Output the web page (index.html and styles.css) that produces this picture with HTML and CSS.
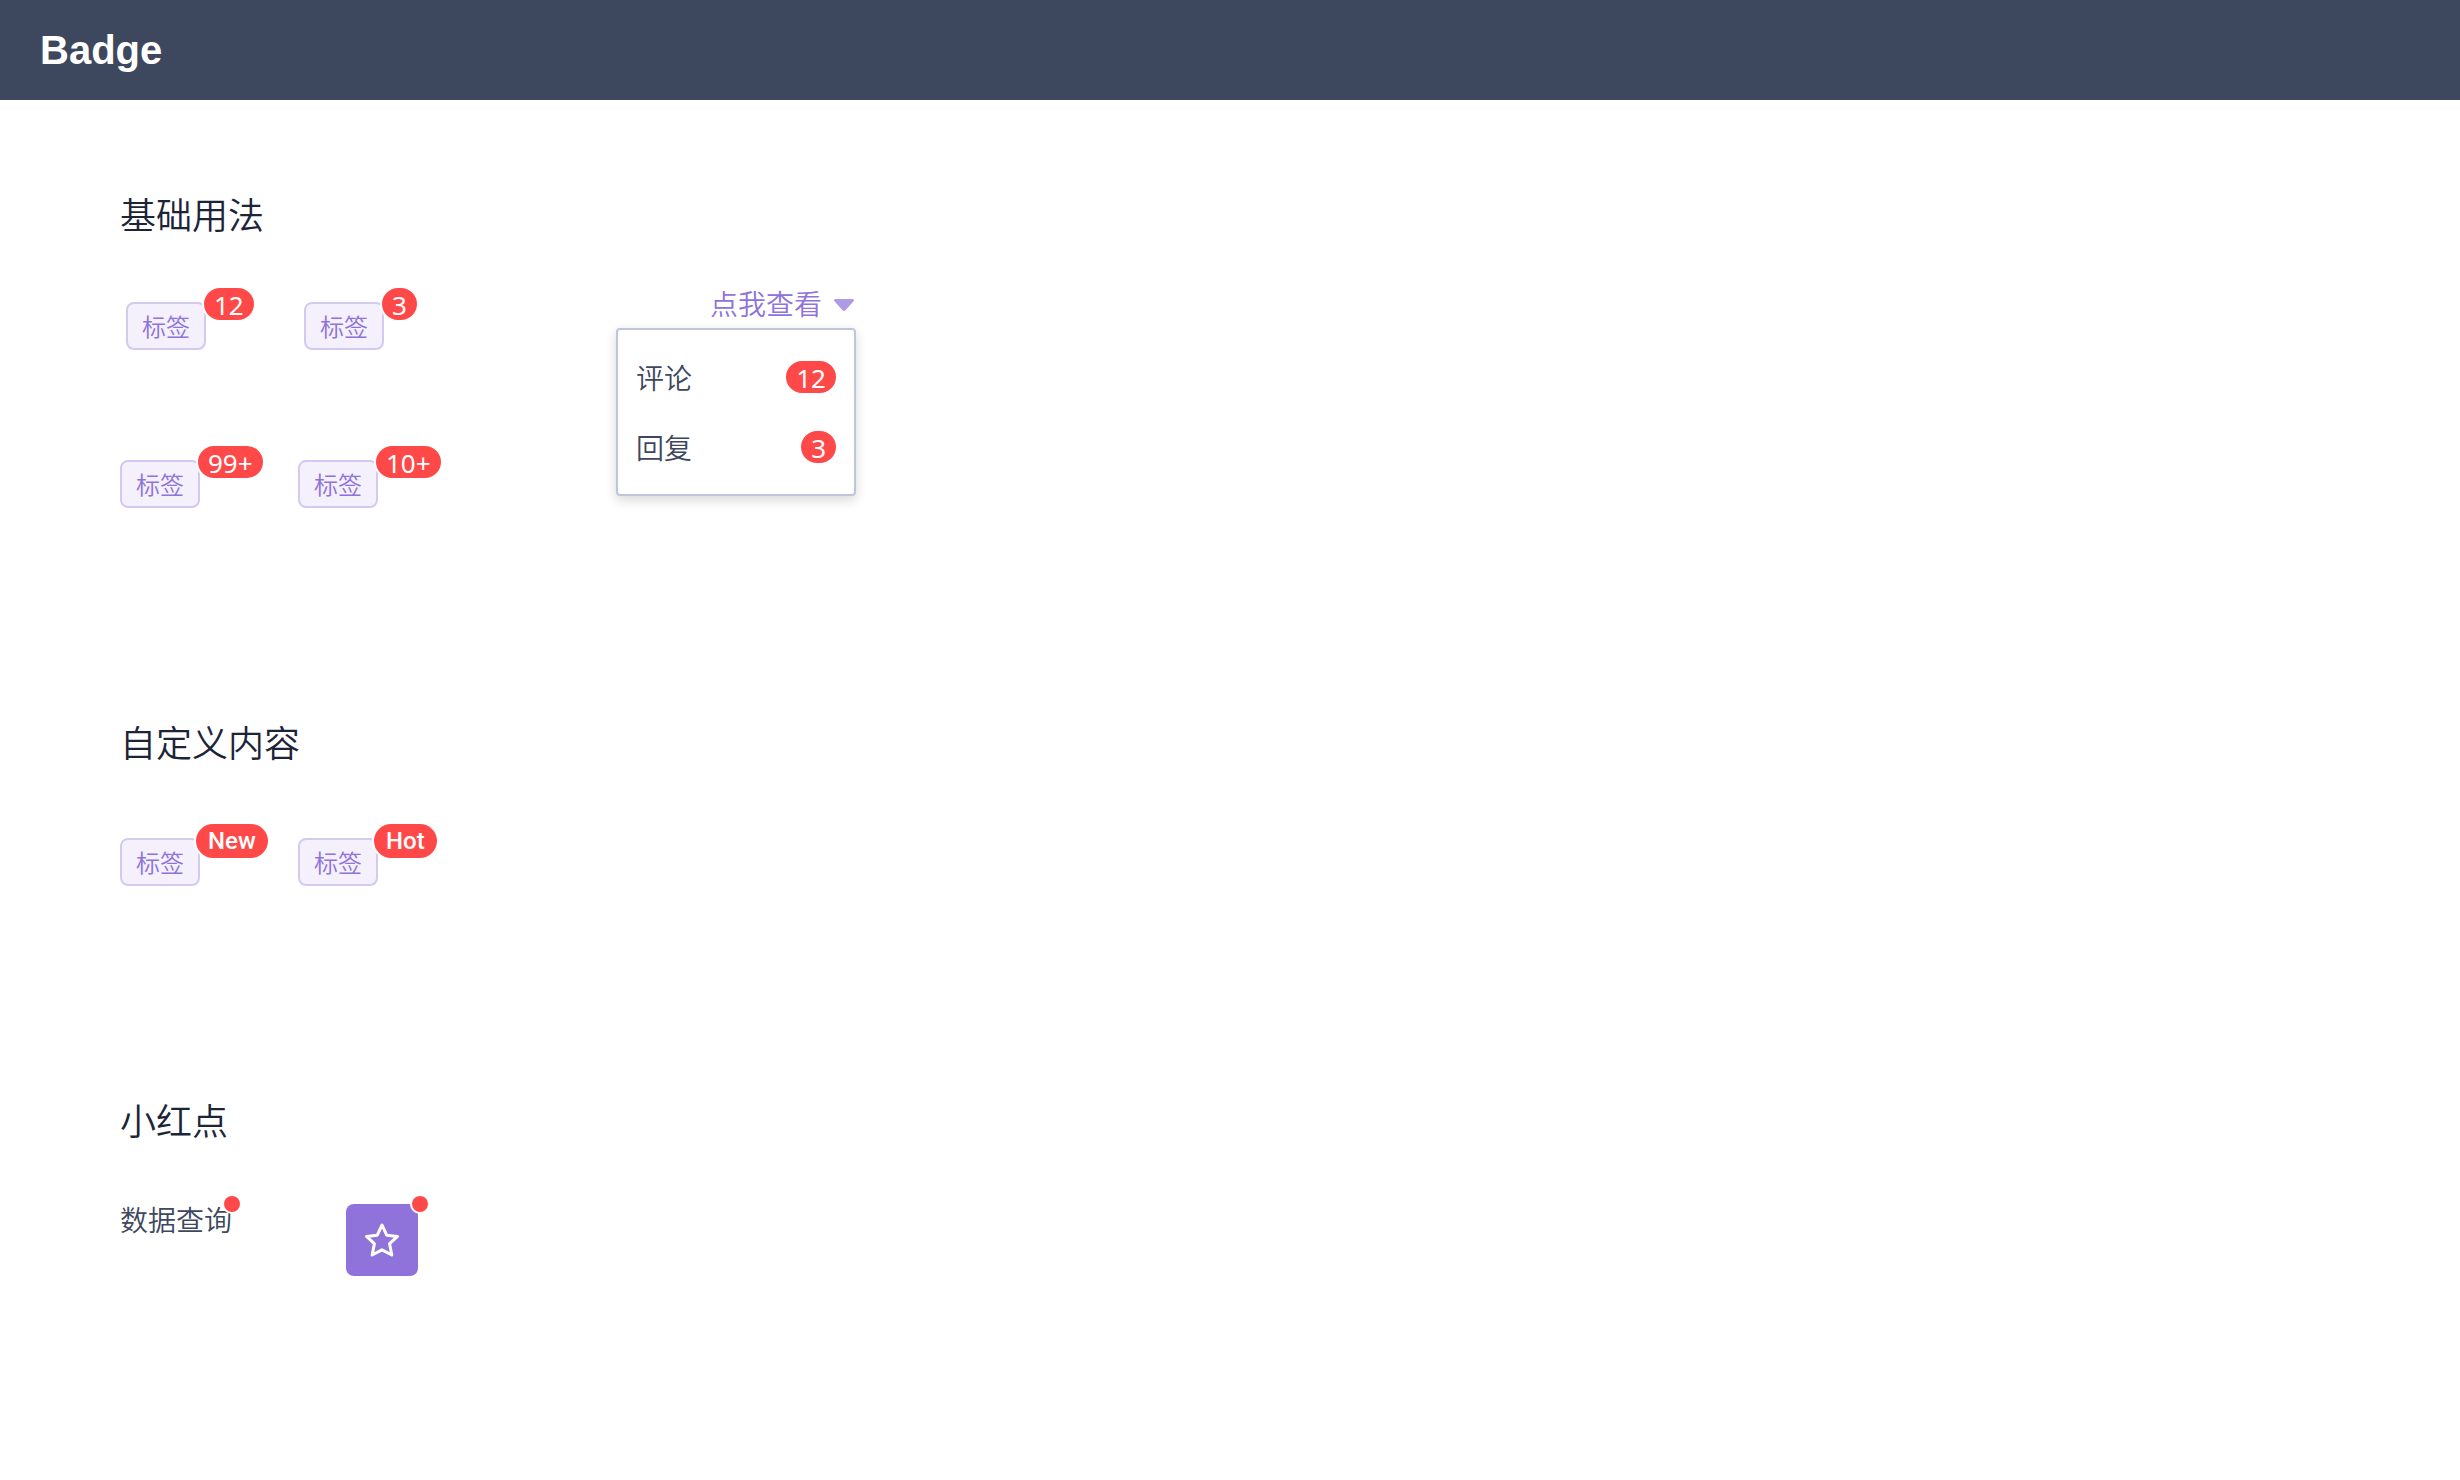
FILE: index.html
```html
<!DOCTYPE html>
<html lang="zh-CN">
<head>
<meta charset="utf-8">
<title>Badge</title>
<link rel="stylesheet" href="styles.css">
</head>
<body>
<header class="topbar"><h1 class="topbar-title">Badge</h1></header>
<main class="content">
  <section class="section">
    <h2 class="section-title">基础用法</h2>
    <div class="demo demo-basic">
      <div class="tag-rows">
        <div class="tag-row tag-row-indent">
          <span class="tag">标签<span class="badge badge-corner">12</span></span>
          <span class="tag">标签<span class="badge badge-corner">3</span></span>
        </div>
        <div class="tag-row">
          <span class="tag">标签<span class="badge badge-corner">99+</span></span>
          <span class="tag">标签<span class="badge badge-corner">10+</span></span>
        </div>
      </div>
      <div class="dropdown">
        <button class="dropdown-trigger" type="button" aria-expanded="true">点我查看
          <svg class="caret" viewBox="0 0 20 12" aria-hidden="true"><path d="M1.5 0h17c1.3 0 2 1.3 1 2.300l-8 9c-.8.900-2.200.900-3 0l-8-9C-.5 1.300.2 0 1.500 0z"/></svg>
        </button>
        <ul class="menu">
          <li class="menu-item">评论<span class="badge">12</span></li>
          <li class="menu-item">回复<span class="badge">3</span></li>
        </ul>
      </div>
    </div>
  </section>
  <section class="section">
    <h2 class="section-title">自定义内容</h2>
    <div class="demo demo-custom">
      <div class="tag-row">
        <span class="tag">标签<span class="badge-text">New</span></span>
        <span class="tag">标签<span class="badge-text">Hot</span></span>
      </div>
    </div>
  </section>
  <section class="section">
    <h2 class="section-title">小红点</h2>
    <div class="demo demo-dot">
      <span class="dot-host">数据查询<span class="dot dot-on-text"></span></span>
      <button class="icon-button" type="button" aria-label="收藏">
        <svg class="star" viewBox="0 0 72 72" aria-hidden="true"><path d="M36 21l4.700 10.200 10.800 1.200-7.900 7.300 2.200 11.300L36 45.800 26.200 51l2.200-11.300-7.900-7.300 10.800-1.200z"/></svg>
        <span class="dot dot-on-button"></span>
      </button>
    </div>
  </section>
</main>
</body>
</html>
```
FILE: styles.css
```css
* { box-sizing: border-box; }

body {
  margin: 0;
  background: #fff;
  color: #3d475e;
  font-family: "Noto Sans CJK SC", sans-serif;
  font-size: 28px;
  font-weight: 350;
  line-height: 40px;
}

.topbar {
  display: flex;
  align-items: center;
  height: 100px;
  padding: 0 40px;
  background: #3d475d;
}

.topbar-title {
  margin: 0;
  color: #fff;
  font: bold 40px/48px "Liberation Sans", sans-serif;
}

.content { padding: 88px 120px 0; }

.section { margin-bottom: 208px; }

.section-title {
  margin: 0;
  color: #1c2438;
  font-size: 36px;
  font-weight: 350;
  line-height: 50px;
}

.demo { display: flex; }

.demo-basic {
  gap: 140px;
  margin-top: 46px;
}

.tag-rows {
  display: grid;
  row-gap: 110px;
  padding-top: 18px;
}

.tag-row {
  display: grid;
  grid-template-columns: 178px 178px;
}

.tag-row-indent { margin-left: 6px; margin-right: -6px; }

.tag {
  position: relative;
  justify-self: start;
  padding: 0 14px;
  border: 2px solid #d4caf0;
  border-radius: 8px;
  background: #f4f0fc;
  color: #8f73da;
  font-size: 24px;
  line-height: 44px;
}

.badge {
  height: 36px;
  padding: 0 10px;
  border: 2px solid #fff;
  border-radius: 18px;
  background: #ff4949;
  color: #fff;
  font-family: "Noto Sans", sans-serif;
  font-size: 26px;
  font-weight: 400;
  line-height: 34px;
  white-space: nowrap;
}

.badge-corner {
  position: absolute;
  top: -18px;
  left: 74px;
}

.badge-text {
  position: absolute;
  top: -16px;
  left: 74px;
  padding: 0 12px;
  border-radius: 17px;
  background: #ff4949;
  box-shadow: 0 0 0 2px #fff;
  color: #fff;
  font-family: Roboto, sans-serif;
  font-size: 24px;
  font-weight: 500;
  line-height: 34px;
}

.dropdown {
  position: relative;
  width: 240px;
}

.dropdown-trigger {
  display: flex;
  align-items: center;
  justify-content: flex-end;
  gap: 12px;
  width: 100%;
  padding: 0 2px;
  border: 0;
  background: none;
  color: #8f73da;
  font: inherit;
  line-height: 38px;
}

.caret {
  width: 20px;
  height: 12px;
  margin-top: 4px;
  fill: #af9be5;
}

.menu {
  position: absolute;
  top: 44px;
  left: 0;
  width: 100%;
  margin: 0;
  padding: 12px 16px 12px 18px;
  border: 2px solid #bec6da;
  border-radius: 4px;
  background: #fff;
  box-shadow: 0 4px 12px rgba(0, 0, 0, 0.16);
  list-style: none;
}

.menu-item {
  display: flex;
  align-items: center;
  justify-content: space-between;
  height: 70px;
}

.demo-custom { margin-top: 72px; }

.demo-dot {
  align-items: flex-start;
  gap: 114px;
  margin-top: 60px;
}

.dot-host { position: relative; line-height: 30px; }

.dot {
  position: absolute;
  width: 16px;
  height: 16px;
  border-radius: 50%;
  background: #ff4949;
  box-shadow: 0 0 0 2px #fff;
}

.dot-on-text { top: -8px; right: -8px; }

.dot-on-button { top: -8px; right: -10px; }

.icon-button {
  position: relative;
  width: 72px;
  height: 72px;
  padding: 0;
  border: 0;
  border-radius: 8px;
  background: #8f73da;
}

.star {
  display: block;
  fill: none;
  stroke: #fff;
  stroke-width: 3;
  stroke-linejoin: round;
}
```
